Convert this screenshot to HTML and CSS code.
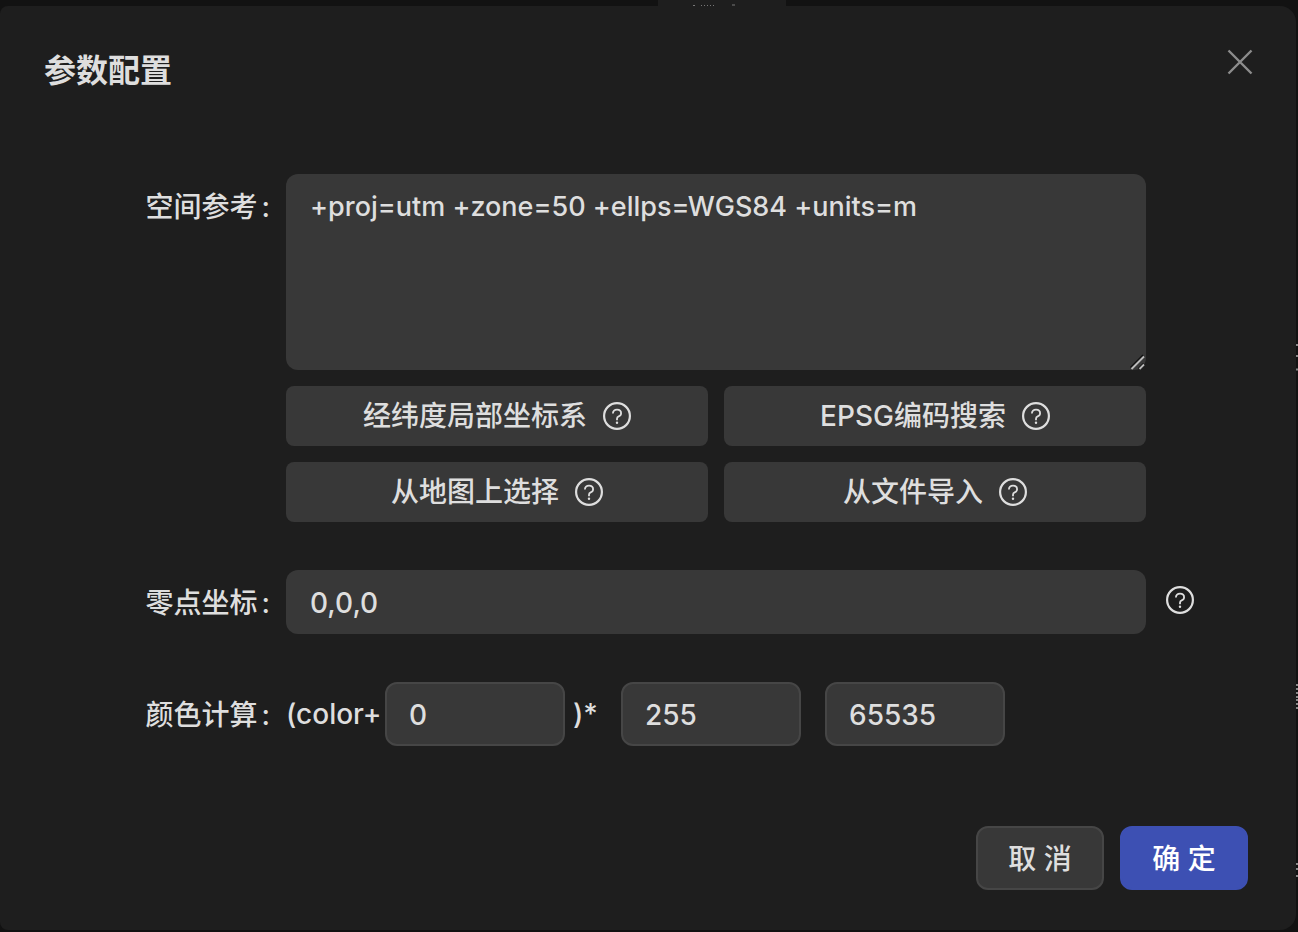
FILE: index.html
```html
<!DOCTYPE html>
<html lang="zh-CN">
<head>
    <meta charset="UTF-8">
    <meta name="viewport" content="width=device-width, initial-scale=1.0">
    <title>参数配置</title>
    <link rel="stylesheet" href="styles.css">
</head>
<body>
    <svg width="0" height="0" class="sprite" aria-hidden="true">
        <symbol id="help" viewBox="0 0 28 28">
            <circle cx="14" cy="14" r="12.9" fill="none" stroke="currentColor" stroke-width="2.2"/>
            <path d="M9.9 11.6C9.9 9.1 11.6 7.6 14 7.6S18.1 9.1 18.1 11.2C18.1 12.9 17 13.9 15.7 14.4C14.5 14.9 14 15.6 14 16.7V18.2" fill="none" stroke="currentColor" stroke-width="1.8"/>
            <circle cx="14" cy="20.8" r="1.2" fill="currentColor"/>
        </symbol>
    </svg>

    <!-- page behind the dialog -->
    <div class="backdrop-tab">
        <svg width="128" height="6" viewBox="0 0 128 6" aria-hidden="true">
            <path d="M35 5.500h2M43 5.500h1M46 5.500h1M49 5.500h1M52 5.500h1M55 5.500h1M74 5h3" stroke="#777" stroke-width="1"/>
        </svg>
    </div>
    <svg class="backdrop-rail" width="2" height="932" viewBox="0 0 2 932" aria-hidden="true">
        <path d="M0 345h2M0 356h2M0 369.500h2M0 685h2M0 689h2M0 693h2M0 697h2M0 700h2M0 704h2M0 708h2M0 864h2M0 869h2M0 876h2" stroke="#888" stroke-width="2"/>
    </svg>

    <form class="modal" role="dialog" aria-labelledby="title">
        <div class="modal-header">
            <h1 id="title">参数配置</h1>
            <button type="button" class="close" aria-label="关闭">
                <svg width="26" height="26" viewBox="0 0 26 26"><path d="M1.500 1.500L24.500 24.500M24.500 1.500L1.500 24.500" stroke="currentColor" stroke-width="2.400"/></svg>
            </button>
        </div>

        <div class="modal-body">
            <div class="row">
                <label for="srs">空间参考<span class="colon">:</span></label>
                <div class="field">
                    <div class="textarea-wrap">
                        <textarea id="srs" spellcheck="false">+proj=utm +zone=50 +ellps=WGS84 +units=m</textarea>
                        <svg class="grip" width="16" height="16" viewBox="0 0 16 16" aria-hidden="true">
                            <path d="M0.500 13.500L13 1M8.500 14.500L13.500 9.500" stroke="#111" stroke-width="1.500"/>
                            <path d="M1.500 15L14 2.500M9.500 15L14 10.500" stroke="#bbb" stroke-width="1.800"/>
                        </svg>
                    </div>
                    <div class="choices">
                        <button type="button">经纬度局部坐标系<svg class="help"><use href="#help"/></svg></button>
                        <button type="button">EPSG编码搜索<svg class="help"><use href="#help"/></svg></button>
                        <button type="button">从地图上选择<svg class="help"><use href="#help"/></svg></button>
                        <button type="button">从文件导入<svg class="help"><use href="#help"/></svg></button>
                    </div>
                </div>
            </div>

            <div class="row">
                <label for="origin">零点坐标<span class="colon">:</span></label>
                <div class="field">
                    <input type="text" id="origin" value="0,0,0">
                </div>
                <svg class="help"><use href="#help"/></svg>
            </div>

            <div class="row">
                <label for="offset">颜色计算<span class="colon">:</span></label>
                <div class="field formula">
                    <span class="open">(color+</span>
                    <input type="text" id="offset" value="0">
                    <span class="times">)*</span>
                    <input type="text" value="255" aria-label="乘数">
                    <input type="text" value="65535" aria-label="最大值">
                </div>
            </div>
        </div>

        <div class="modal-footer">
            <button type="button" class="btn">取 消</button>
            <button type="submit" class="btn primary">确 定</button>
        </div>
    </form>
</body>
</html>
```
FILE: styles.css
```css
* {
    box-sizing: border-box;
}

body {
    display: flex;
    flex-direction: column;
    min-height: 100vh;
    margin: 0;
    padding: 6px 2px 2px 0;
    position: relative;
    background: #121212;
    color: #dedede;
    color-scheme: dark;
}

body, button, input, textarea {
    font-family: Inter, "Noto Sans CJK SC", sans-serif;
    font-size: 28px;
    font-weight: 500;
    line-height: 44px;
}

button, input, textarea {
    margin: 0;
    color: #dedede;
    background: #383838;
    border: none;
}

button {
    cursor: pointer;
}

.sprite {
    position: absolute;
}

.backdrop-tab {
    display: flex;
    position: absolute;
    top: 0;
    left: 50%;
    width: 128px;
    height: 6px;
    margin-left: 9px;
    background: #1e1e1e;
}

.backdrop-rail {
    position: absolute;
    top: 0;
    right: 0;
}

.modal {
    flex: 1;
    padding: 40px 48px 40px 0;
    background: #1e1e1e;
    border-radius: 8px 16px 16px 8px;
}

.modal-header {
    display: flex;
    justify-content: space-between;
    align-items: flex-start;
    padding-left: 44px;
}

h1 {
    margin: 0;
    font-size: 32px;
    line-height: 50px;
    font-weight: bold;
}

.close {
    display: flex;
    padding: 3px;
    margin-right: -8px;
    background: none;
    color: #8c8c8c;
}

.modal-body {
    display: flex;
    flex-direction: column;
    gap: 48px;
    margin: 78px 102px 80px 0;
}

.row {
    display: flex;
    position: relative;
}

.row label {
    flex: 0 0 286px;
    padding: 11px 16px 9px 0;
    text-align: right;
}

.colon {
    margin-left: 4px;
}

.field {
    flex: 1;
    min-width: 0;
}

textarea,
input {
    display: block;
    width: 100%;
    border-radius: 12px;
}

.textarea-wrap {
    position: relative;
}

textarea {
    height: 196px;
    padding: 11px 24px 9px;
    font-size: 27px;
    resize: vertical;
}

textarea::-webkit-resizer {
    background: transparent;
}

.grip {
    position: absolute;
    right: 0;
    bottom: 0;
    pointer-events: none;
}

input {
    height: 64px;
    padding: 10px 24px 8px;
}

.help {
    flex: none;
    width: 28px;
    height: 28px;
}

/* hint to the right of the input */
.row > .help {
    position: absolute;
    top: 16px;
    left: 100%;
    margin-left: 20px;
}

.choices {
    display: grid;
    grid-template-columns: 1fr 1fr;
    gap: 16px;
    margin-top: 16px;
}

.choices button {
    display: flex;
    justify-content: center;
    align-items: center;
    gap: 16px;
    height: 60px;
    padding: 0 16px;
    line-height: 46px;
    border-radius: 8px;
}

.formula {
    display: flex;
    align-items: center;
}

.formula input {
    width: 180px;
    padding: 10px 22px 8px;
    border: 2px solid #464646;
}

.formula input + input {
    margin-left: 24px;
}

.open {
    width: 99px;
}

.times {
    width: 56px;
    padding-left: 8px;
}

.modal-footer {
    display: flex;
    justify-content: flex-end;
    gap: 16px;
}

.btn {
    width: 128px;
    height: 64px;
    padding: 2px 0 0;
    border: 2px solid #464646;
    border-radius: 12px;
}

.primary {
    color: #fff;
    background: #3d50b3;
    border-color: #3d50b3;
}
```
